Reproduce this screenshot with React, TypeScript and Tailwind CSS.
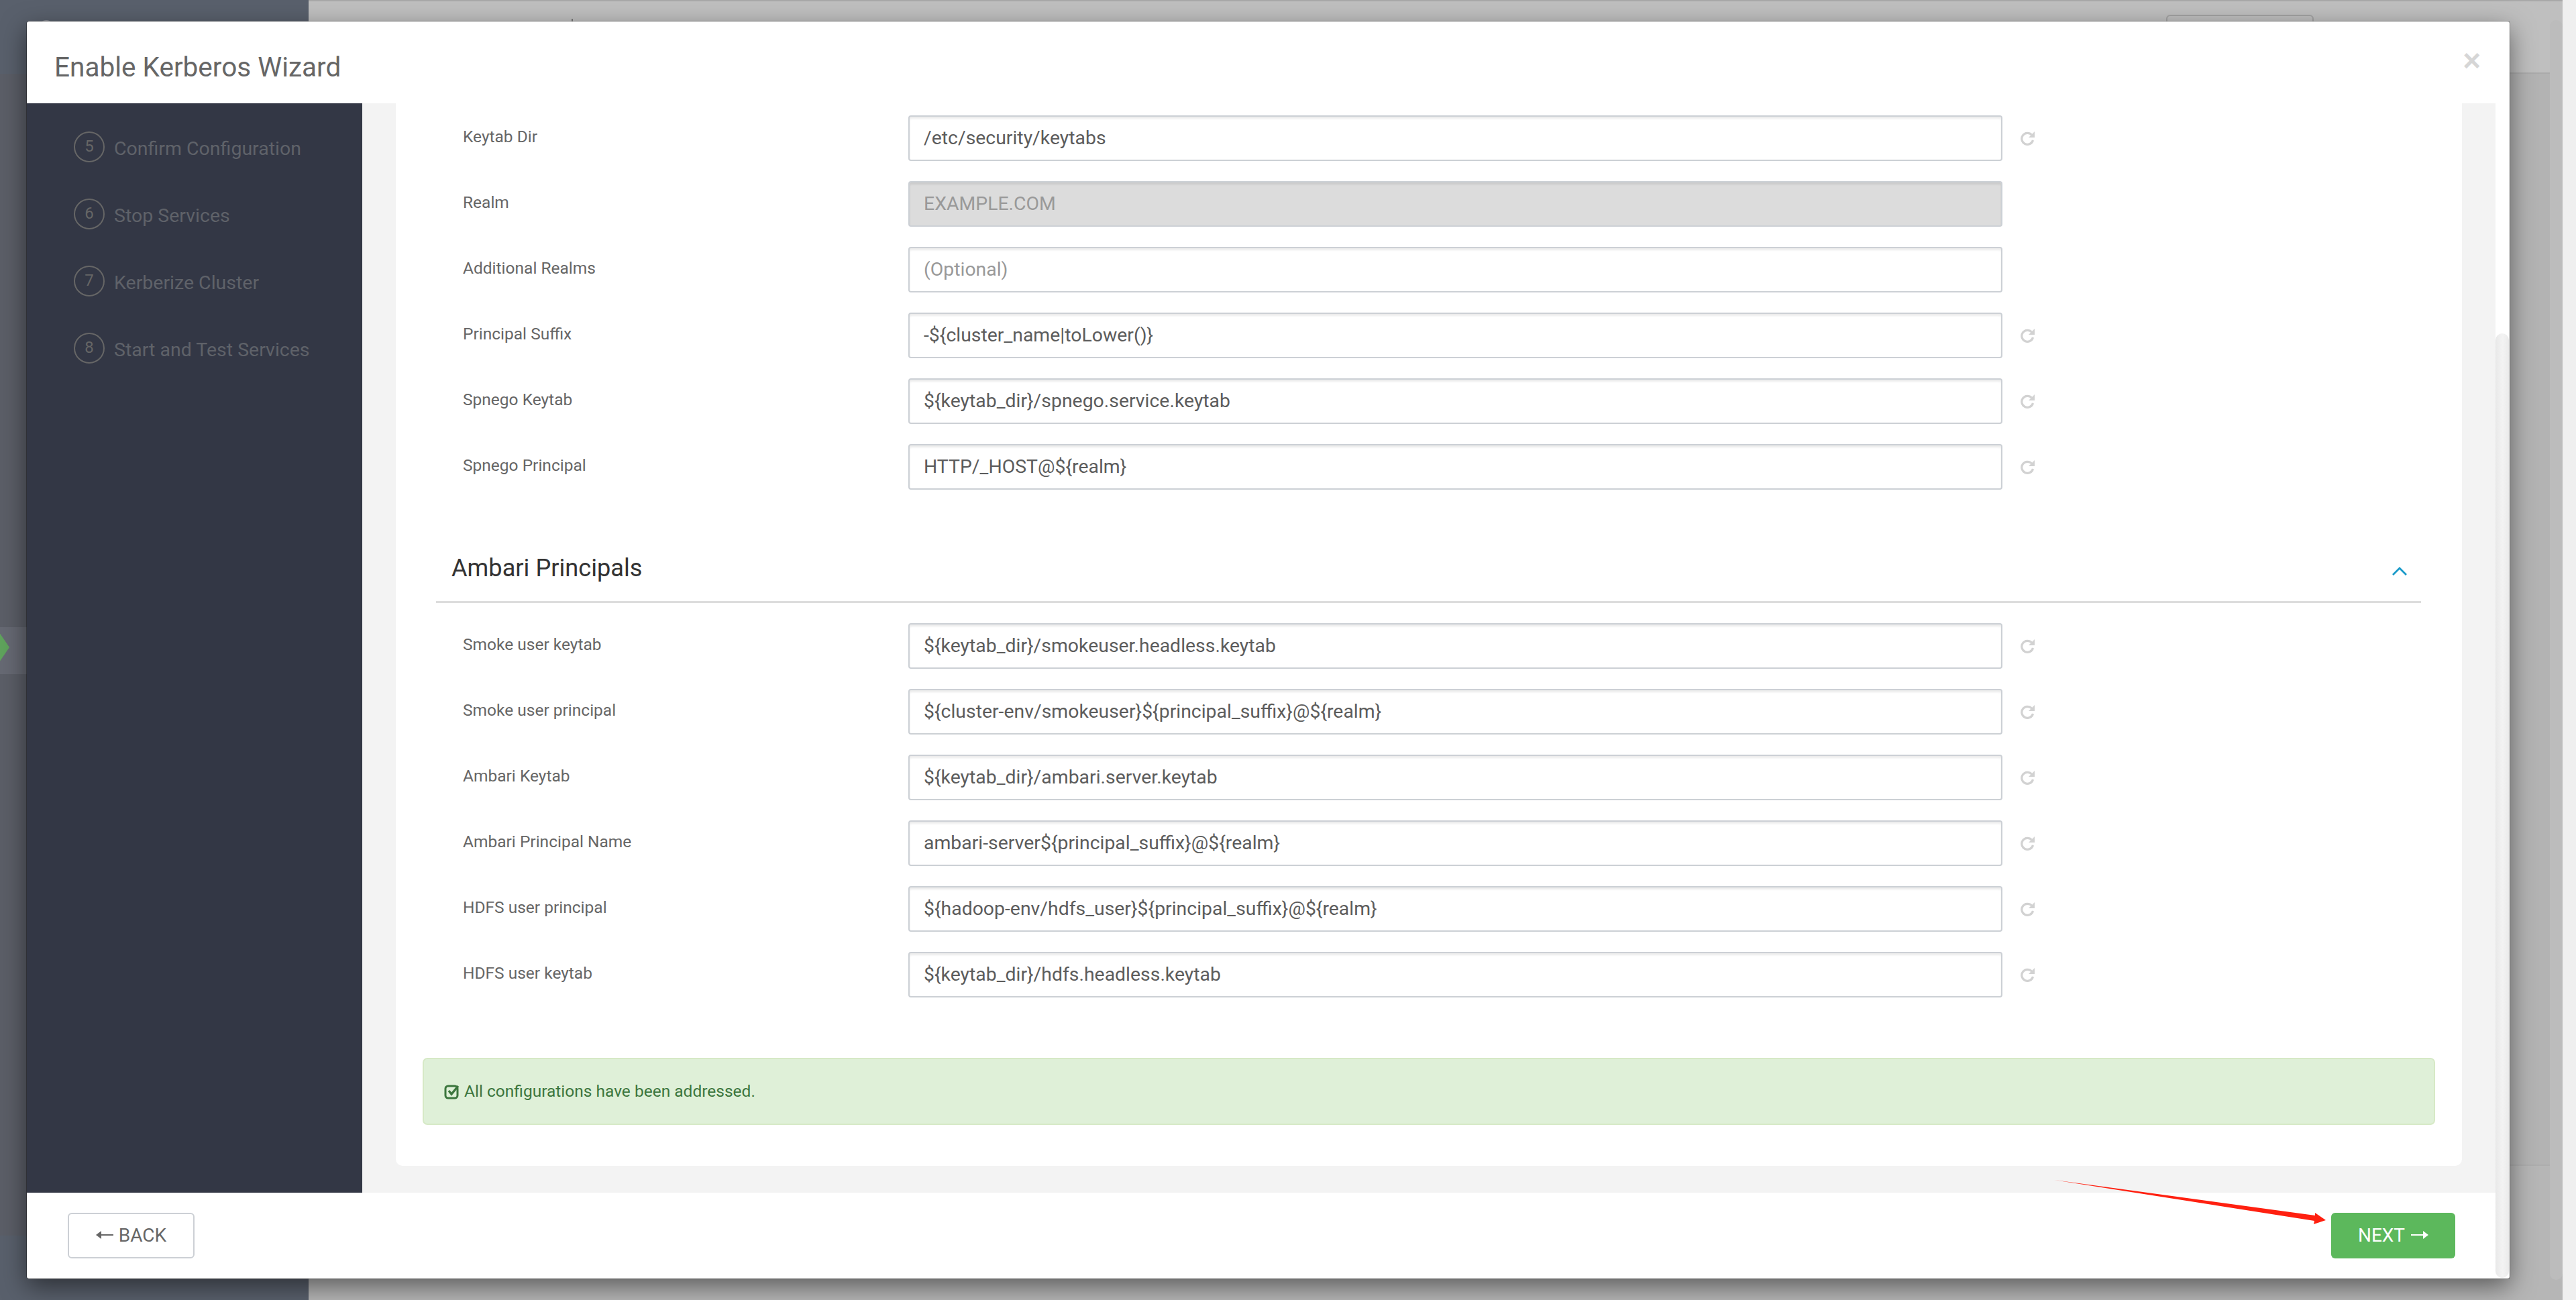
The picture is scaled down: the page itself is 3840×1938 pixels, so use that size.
const firstRows = [
  { label: 'Keytab Dir', value: '/etc/security/keytabs', reset: true },
  { label: 'Realm', value: 'EXAMPLE.COM', disabled: true },
  { label: 'Additional Realms', placeholder: '(Optional)' },
  { label: 'Principal Suffix', value: '-${cluster_name|toLower()}', reset: true },
  { label: 'Spnego Keytab', value: '${keytab_dir}/spnego.service.keytab', reset: true },
  { label: 'Spnego Principal', value: 'HTTP/_HOST@${realm}', reset: true },
]

const ambariRows = [
  { label: 'Smoke user keytab', value: '${keytab_dir}/smokeuser.headless.keytab', reset: true },
  { label: 'Smoke user principal', value: '${cluster-env/smokeuser}${principal_suffix}@${realm}', reset: true },
  { label: 'Ambari Keytab', value: '${keytab_dir}/ambari.server.keytab', reset: true },
  { label: 'Ambari Principal Name', value: 'ambari-server${principal_suffix}@${realm}', reset: true },
  { label: 'HDFS user principal', value: '${hadoop-env/hdfs_user}${principal_suffix}@${realm}', reset: true },
  { label: 'HDFS user keytab', value: '${keytab_dir}/hdfs.headless.keytab', reset: true },
]

const steps = [
  { n: 5, name: 'Confirm Configuration' },
  { n: 6, name: 'Stop Services' },
  { n: 7, name: 'Kerberize Cluster' },
  { n: 8, name: 'Start and Test Services' },
]

type Row = { label: string; value?: string; placeholder?: string; disabled?: boolean; reset?: boolean }

function ResetIcon() {
  return (
    <svg viewBox="0 0 22 22" className="ml-[27px] h-[22px] w-[22px]">
      <path d="M16.5 6 A8.5 8.5 0 1 0 18.5 14" fill="none" stroke="#d2d2d2" strokeWidth="3.2" />
      <polygon points="21,1 21,10 12,10" fill="#d2d2d2" />
    </svg>
  )
}

function LongArrow({ left, color }: { left?: boolean; color: string }) {
  return (
    <svg viewBox="0 0 26 16" className={`mb-[3px] h-[16px] w-[26px] ${left ? 'rotate-180' : ''}`}>
      <path d="M0 7 H19 V9 H0 Z" fill={color} />
      <polygon points="18,2 26,8 18,14" fill={color} />
    </svg>
  )
}

function ConfigRow({ row }: { row: Row }) {
  return (
    <div className="flex h-[68px] items-center">
      <label className="w-[764px] shrink-0 pl-[100px] pb-[4px] text-[24.5px] text-[#666]">{row.label}</label>
      <div
        className={`flex h-[68px] w-[1631px] shrink-0 items-center rounded-[4px] border-2 border-[#ccd0d5] px-[21px] pt-[1px] text-[28.4px] shadow-[inset_0_3px_3px_rgba(0,0,0,0.08)] ${
          row.disabled ? 'bg-[#dcdcdc] text-[#999]' : 'bg-white text-[#5c5c5c]'
        }`}
      >
        {row.value ?? <span className="text-[#999]">{row.placeholder}</span>}
      </div>
      {row.reset && <ResetIcon />}
    </div>
  )
}

export default function App() {
  return (
    <div className="relative h-[1938px] w-[3840px] overflow-hidden bg-[#efefef] font-['Roboto',sans-serif]">
      {/* page behind the dialog */}
      <div className="flex h-full w-[3820px]">
        <div className="relative flex h-full w-[460px] flex-col bg-[#59606c]">
          <div className="absolute left-[58px] top-[30px] h-[22px] w-[22px] rounded-full bg-[#8d9098]" />
          <div className="h-[110px] shrink-0" />
          <div className="h-[825px] shrink-0 bg-[#5b5e67]" />
          <div className="relative h-[70px] shrink-0 bg-[#666973]">
            <div className="absolute left-[-10px] top-[-5px] h-[70px] w-[24px] bg-[#5fa35c] [clip-path:polygon(0_0,100%_50%,0_100%)]" />
          </div>
          <div className="h-[837px] shrink-0 bg-[#5b5e67]" />
          <div className="flex-1" />
        </div>
        <div className="relative flex flex-1 flex-col bg-[#b6b6b6]">
          <div className="h-[2px] bg-[#a8a8a8]" />
          <div className="flex h-[108px] justify-end border-b-2 border-[#ababab] bg-[#bfbfbf] pr-[371px] pt-[20px]">
            <div className="h-[40px] w-[220px] rounded-[6px] border-2 border-[#a3a3a3]" />
          </div>
          <div className="h-[1628px] border-b-2 border-[#adadad] bg-[#b3b3b3]" />
          <div className="absolute left-[392px] top-[28px] h-[4px] w-[2px] bg-[#777]" />
          <div className="absolute right-0 top-[30px] h-[1878px] w-[19px] rounded-full bg-[#bcbcbc]" />
        </div>
      </div>

      {/* dialog */}
      <div className="absolute left-[40px] top-[32px] flex h-[1874px] w-[3701px] flex-col rounded-[3px] bg-white shadow-[0_12px_37px_rgba(0,0,0,0.5)] outline outline-1 outline-[rgba(0,0,0,0.3)]">
        <div className="flex h-[122px] shrink-0 items-start justify-between pl-[41px] pr-[43px]">
          <h1 className="pt-[44px] text-[40.5px] font-normal leading-[1.2] text-[#666]">Enable Kerberos Wizard</h1>
          <span className="pt-[35px] font-['Liberation_Sans',sans-serif] text-[46px] font-bold leading-none text-[#d6d6d6]">×</span>
        </div>

        <div className="flex min-h-0 flex-1">
          <aside className="w-[500px] shrink-0 bg-[#333745] pl-[70px] pt-[42px]">
            {steps.map(step => (
              <div key={step.n} className="flex h-[100px] items-start">
                <span className="flex h-[46px] w-[46px] shrink-0 items-center justify-center rounded-full border-[2.5px] border-[#666] pb-[2px] text-[24px] text-[#666]">
                  {step.n}
                </span>
                <span className="ml-[14px] pt-[5px] text-[28.5px] text-[#5f6269]">{step.name}</span>
              </div>
            ))}
          </aside>

          <main className="min-w-0 flex-1 bg-[#f3f3f3] pl-[50px] pr-[50px]">
            <div className="h-[1584px] rounded-b-[10px] bg-white pt-[18px]">
              <div className="flex flex-col gap-[30px]">
                {firstRows.map(row => (
                  <ConfigRow key={row.label} row={row} />
                ))}
              </div>

              <div className="ml-[60px] mr-[61px] mt-[77px] flex h-[92px] items-start justify-between border-b-[3px] border-[#ddd] pl-[23px] pr-[21px]">
                <h2 className="pt-[18px] text-[36.2px] font-normal leading-[1.2] text-[#333]">Ambari Principals</h2>
                <svg viewBox="0 0 22 13" className="mt-[38px] h-[13px] w-[22px] fill-none stroke-[#1a9ac9] stroke-[2.8]">
                  <path d="M1 12 L11 2 L21 12" />
                </svg>
              </div>

              <div className="mt-[30px] flex flex-col gap-[30px]">
                {ambariRows.map(row => (
                  <ConfigRow key={row.label} row={row} />
                ))}
              </div>

              <div className="mx-[40px] mt-[90px] flex h-[100px] items-center rounded-[7px] border-2 border-[#d6e9c6] bg-[#dff0d8] pl-[30px] text-[24.5px] text-[#3c763d]">
                <svg viewBox="0 0 24 24" className="mr-[6px] h-[24px] w-[24px] fill-none stroke-[#3c763d]">
                  <rect x="2" y="4" width="18" height="18" rx="4" strokeWidth="3" />
                  <path d="M7 11 L11 16 L21 4" strokeWidth="3.4" />
                </svg>
                All configurations have been addressed.
              </div>
            </div>
          </main>

          <div className="relative w-[21px] shrink-0 bg-white">
            <div className="absolute bottom-[-127px] left-0 top-[343px] w-[20px] rounded-full bg-gradient-to-r from-[#e8e8e8] via-[#f3f3f3] to-[#ebebeb]" />
          </div>
        </div>

        <div className="flex h-[128px] shrink-0 items-center justify-between pl-[61px] pr-[81px]">
          <button className="flex h-[68px] w-[189px] items-center justify-center gap-[8px] rounded-[6px] border-2 border-[#ccd0d5] bg-white text-[28px] text-[#666]">
            <LongArrow left color="#666" /> BACK
          </button>
          <button className="flex h-[68px] w-[185px] items-center justify-center gap-[9px] rounded-[6px] bg-[#5cb85c] text-[28px] text-white">
            NEXT <LongArrow color="#fff" />
          </button>
        </div>
      </div>

      {/* red annotation arrow drawn over the screenshot */}
      <svg viewBox="0 0 3840 1938" className="pointer-events-none absolute inset-0 h-[1938px] w-[3840px]">
        <polygon points="3062,1759 3451,1812 3451,1808 3467,1819 3449,1825 3450,1820" fill="#ff2010" />
      </svg>
    </div>
  )
}
